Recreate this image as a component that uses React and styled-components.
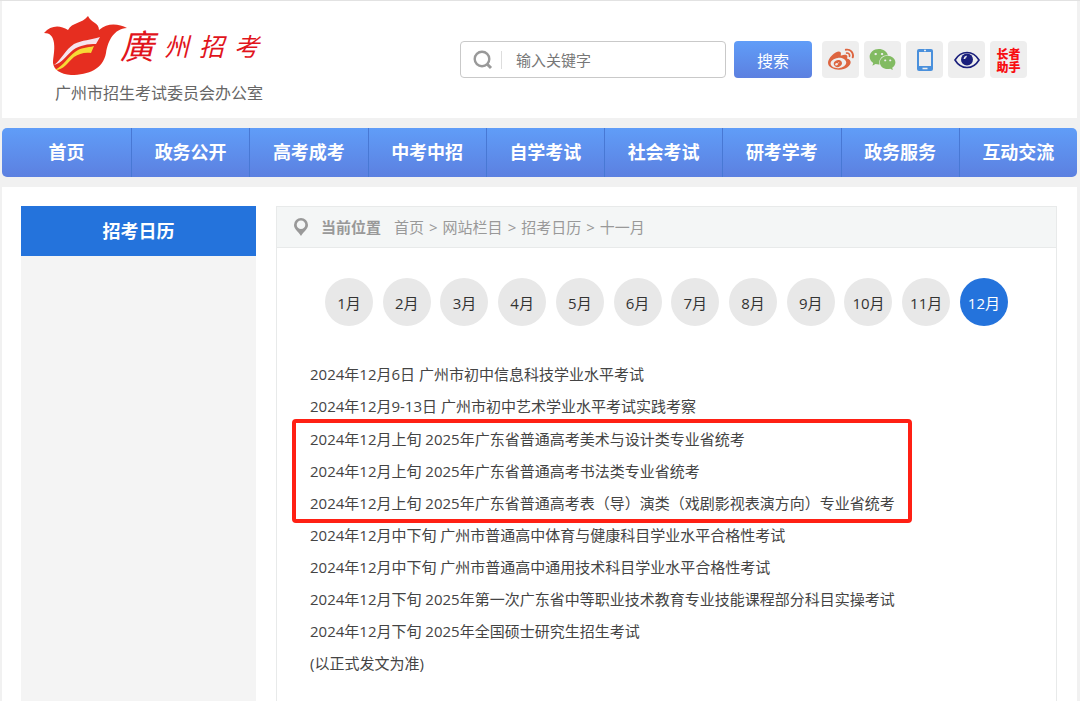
import React from 'react';
import styled, { createGlobalStyle } from 'styled-components';
import { FaWeibo, FaWeixin } from 'react-icons/fa';

const navItems = [
	'首页',
	'政务公开',
	'高考成考',
	'中考中招',
	'自学考试',
	'社会考试',
	'研考学考',
	'政务服务',
	'互动交流',
];

const crumbs = ['首页', '网站栏目', '招考日历', '十一月'];
const months = Array.from({ length: 12 }, (_, idx) => `${idx + 1}月`);
const activeMonth = '12月';

const eventsBefore = [
	'2024年12月6日 广州市初中信息科技学业水平考试',
	'2024年12月9-13日 广州市初中艺术学业水平考试实践考察',
];
const eventsMarked = [
	'2024年12月上旬 2025年广东省普通高考美术与设计类专业省统考',
	'2024年12月上旬 2025年广东省普通高考书法类专业省统考',
	'2024年12月上旬 2025年广东省普通高考表（导）演类（戏剧影视表演方向）专业省统考',
];
const eventsAfter = [
	'2024年12月中下旬 广州市普通高中体育与健康科目学业水平合格性考试',
	'2024年12月中下旬 广州市普通高中通用技术科目学业水平合格性考试',
	'2024年12月下旬 2025年第一次广东省中等职业技术教育专业技能课程部分科目实操考试',
	'2024年12月下旬 2025年全国硕士研究生招生考试',
	'(以正式发文为准)',
];

const FlowerLogo = () => (
	<svg width='84' height='60' viewBox='0 0 84 60' aria-hidden='true'>
		<path
			fill='#e62e20'
			d='M0 17C7 9 16 9 24 14C28 6 38 8 44 0C47 7 55 6 55 14C64 6 75 8 83 12C70 13 64 24 62 37C59 53 45 59 27 59C16 58 10 54 9 47C9 41 11 35 10 27C9 20 6 17 0 17Z'
		/>
		<path
			fill='#f6e3ee'
			d='M10 49C17 44 21 34 30 28C38 24 47 24 56 21L52 28C44 28 36 29 29 34C22 40 18 47 10 49Z'
		/>
		<path
			fill='#f7d936'
			d='M11 54C20 49 24 41 31 36C37 31 43 32 50 30L47 37C40 36 35 38 30 41C23 47 20 54 11 54Z'
		/>
	</svg>
);

const PhoneIcon = () => (
	<svg width='18' height='24' viewBox='0 0 18 24' aria-hidden='true'>
		<rect x='1' y='1' width='16' height='22' rx='2' fill='#4a90dc' />
		<rect x='3' y='4' width='12' height='14' fill='#eee' />
		<path d='M8 2.5h2M6.5 20.5h5' stroke='#eee' strokeWidth='1.5' />
	</svg>
);

const EyeIcon = () => (
	<svg width='26' height='18' viewBox='0 0 26 18' aria-hidden='true'>
		<path
			d='M1 9C7 -1 19 -1 25 9C19 19 7 19 1 9Z'
			fill='none'
			stroke='#1a1f7c'
			strokeWidth='1.6'
		/>
		<circle cx='13' cy='8.5' r='6' fill='#1a1f7c' />
		<path d='M9.500 8Q9.800 5.200 12.500 4.500L12.800 6Q11.500 6.500 11.200 8Z' fill='#eee' />
	</svg>
);

const SearchIcon = () => (
	<svg width='20' height='20' viewBox='0 0 20 20' aria-hidden='true'>
		<circle cx='9' cy='9' r='7.3' fill='none' stroke='#999' strokeWidth='2.4' />
		<path d='M14 14L18 18' stroke='#999' strokeWidth='3' />
	</svg>
);

const PinIcon = () => (
	<svg width='14' height='18' viewBox='0 0 14 18' aria-hidden='true'>
		<path
			fill='#999'
			fillRule='evenodd'
			d='M7 0A7 7 0 0 1 14 7C14 11 10 13 7 18C4 13 0 11 0 7A7 7 0 0 1 7 0ZM7 2.500A4.300 4.300 0 1 0 7 11.100A4.300 4.300 0 1 0 7 2.500Z'
		/>
	</svg>
);

const App = () => {
	return (
		<>
			<GlobalStyle />
			<Page>
				<Header>
					<Brand href='#'>
						<BrandTop>
							<FlowerLogo />
							<BrandName>
								<BrandFirst>廣</BrandFirst>
								<span>州</span>
								<span>招</span>
								<span>考</span>
							</BrandName>
						</BrandTop>
						<BrandSub>广州市招生考试委员会办公室</BrandSub>
					</Brand>
					<Tools>
						<SearchForm onSubmit={e => e.preventDefault()}>
							<SearchField>
								<SearchIcon />
								<SearchInput
									type='text'
									name='keyword'
									aria-label='输入关键字'
									placeholder='输入关键字'
								/>
							</SearchField>
							<SearchButton type='submit'>搜索</SearchButton>
						</SearchForm>
						<Shortcuts>
							<Shortcut href='#' aria-label='微博' $color='#dd6540'>
								<FaWeibo size={26} />
							</Shortcut>
							<Shortcut href='#' aria-label='微信' $color='#82bb62'>
								<FaWeixin size={27} />
							</Shortcut>
							<Shortcut href='#' aria-label='手机版'>
								<PhoneIcon />
							</Shortcut>
							<Shortcut href='#' aria-label='无障碍'>
								<EyeIcon />
							</Shortcut>
							<Shortcut href='#' $color='#f80d12'>
								<span>长者</span>
								<span>助手</span>
							</Shortcut>
						</Shortcuts>
					</Tools>
				</Header>

				<Nav>
					{navItems.map(item => (
						<NavLink key={item} href='#'>
							{item}
						</NavLink>
					))}
				</Nav>

				<Main>
					<Sidebar>
						<SidebarTitle>招考日历</SidebarTitle>
					</Sidebar>
					<Content>
						<Breadcrumb aria-label='当前位置'>
							<PinIcon />
							<strong>当前位置</strong>
							<CrumbList>
								{crumbs.map((crumb, idx) => (
									<React.Fragment key={crumb}>
										{idx > 0 && <span>&gt;</span>}
										<a href='#'>{crumb}</a>
									</React.Fragment>
								))}
							</CrumbList>
						</Breadcrumb>
						{/* --- months --- */}
						<Months>
							{months.map(month => (
								<MonthButton
									key={month}
									type='button'
									$active={month === activeMonth}>
									{month}
								</MonthButton>
							))}
						</Months>
						{/* --- events --- */}
						<Events>
							{eventsBefore.map(text => (
								<p key={text}>{text}</p>
							))}
							<Marked>
								{eventsMarked.map(text => (
									<p key={text}>{text}</p>
								))}
							</Marked>
							{eventsAfter.map(text => (
								<p key={text}>{text}</p>
							))}
						</Events>
					</Content>
				</Main>
			</Page>
		</>
	);
};

const GlobalStyle = createGlobalStyle`
	* {
		box-sizing: border-box;
	}
	body {
		margin: 0;
		background: #f1f1f1;
		color: #444;
		font-family: 'Open Sans', 'Noto Sans CJK SC', sans-serif;
		font-size: 15px;
	}
	p, h2 {
		margin: 0;
	}
	a {
		color: inherit;
		text-decoration: none;
	}
	button, input {
		font: inherit;
	}
	svg {
		display: block;
		flex-shrink: 0;
	}
`;

const Page = styled.div`
	display: flex;
	flex-direction: column;
	gap: 10px;
	min-height: 100vh;
	padding: 0 3px 0 2px;
	border-top: 1px solid #e2e2e2;
`;

const Header = styled.header`
	display: flex;
	justify-content: space-between;
	align-items: flex-start;
	padding: 15px 50px 8px 42px;
	background: #fff;
`;

const Brand = styled.a`
	display: block;
`;

const BrandTop = styled.div`
	display: flex;
`;

const BrandName = styled.span`
	display: flex;
	align-items: center;
	gap: 10px;
	margin-left: -8px;
	color: #e1141c;
	font-size: 25px;
	font-style: italic;
	line-height: 60px;
`;

const BrandFirst = styled.span`
	font-size: 34px;
`;

const BrandSub = styled.div`
	padding-left: 11px;
	color: #666;
	font-size: 16px;
	line-height: 34px;
`;

const Tools = styled.div`
	display: flex;
	gap: 10px;
	padding-top: 25px;
`;

const SearchForm = styled.form`
	display: flex;
	gap: 8px;
`;

const SearchField = styled.label`
	display: flex;
	align-items: center;
	gap: 8px;
	width: 266px;
	height: 37px;
	padding-left: 12px;
	border: 1px solid #c9c9c9;
	border-radius: 4px;
	background: #fff;
`;

const SearchInput = styled.input`
	flex: 1;
	min-width: 0;
	height: 18px;
	padding: 0 14px;
	border: none;
	border-left: 1px solid #ddd;
	outline: none;
	background: transparent;
	&::placeholder {
		color: #777;
	}
`;

const SearchButton = styled.button`
	width: 78px;
	height: 37px;
	padding: 0;
	border: none;
	border-radius: 4px;
	background: linear-gradient(#609df8, #5c80e0);
	color: #fff;
	font-size: 16px;
	cursor: pointer;
`;

const Shortcuts = styled.div`
	display: flex;
	gap: 5px;
`;

const Shortcut = styled.a`
	display: flex;
	flex-direction: column;
	align-items: center;
	justify-content: center;
	width: 37px;
	height: 37px;
	border-radius: 4px;
	background: #eee;
	color: ${({ $color }) => $color};
	font-family: 'Noto Sans CJK SC', sans-serif;
	font-size: 12px;
	font-weight: 900;
	line-height: 13px;
`;

const Nav = styled.nav`
	display: flex;
	border-radius: 5px;
	background: linear-gradient(#609df8, #5c80e0);
`;

const NavLink = styled.a`
	flex: 1;
	border-left: 1px solid #4878d4;
	color: #fff;
	font-size: 18px;
	font-weight: bold;
	line-height: 49px;
	text-align: center;
	&:first-child {
		flex: 0 0 129px;
		border-left: none;
	}
`;

const Main = styled.main`
	display: flex;
	flex: 1;
	gap: 20px;
	padding: 19px 20px 0 19px;
	background: #fff;
`;

const Sidebar = styled.aside`
	flex: 0 0 235px;
	background: #f4f4f4;
`;

const SidebarTitle = styled.h2`
	background: #2473dc;
	color: #fff;
	font-size: 18px;
	line-height: 50px;
	text-align: center;
`;

const Content = styled.section`
	flex: 1;
	min-width: 0;
	border: 1px solid #e8eaea;
	border-bottom: none;
`;

const Breadcrumb = styled.nav`
	display: flex;
	align-items: center;
	gap: 13px;
	padding-left: 17px;
	border-bottom: 1px solid #e8eaea;
	background: #f4f6f6;
	color: #999;
	line-height: 40px;
`;

const CrumbList = styled.span`
	display: flex;
	gap: 5px;
`;

const Months = styled.div`
	display: flex;
	justify-content: space-between;
	padding: 30px 48px 32px;
`;

const MonthButton = styled.button`
	width: 48px;
	height: 48px;
	padding: 0;
	border: none;
	border-radius: 50%;
	background: ${({ $active }) => ($active ? '#2473dc' : '#e8e8e8')};
	color: ${({ $active }) => ($active ? '#fff' : '#333')};
	cursor: pointer;
`;

const Events = styled.div`
	padding: 0 33px;
	line-height: 32px;
`;

/* red frame round the art exam rows */
const Marked = styled.div`
	width: 620px;
	margin: -3px 0 -4px -18px;
	padding-left: 14px;
	border: 4px solid #ff2014;
	border-radius: 4px;
`;

export default App;
